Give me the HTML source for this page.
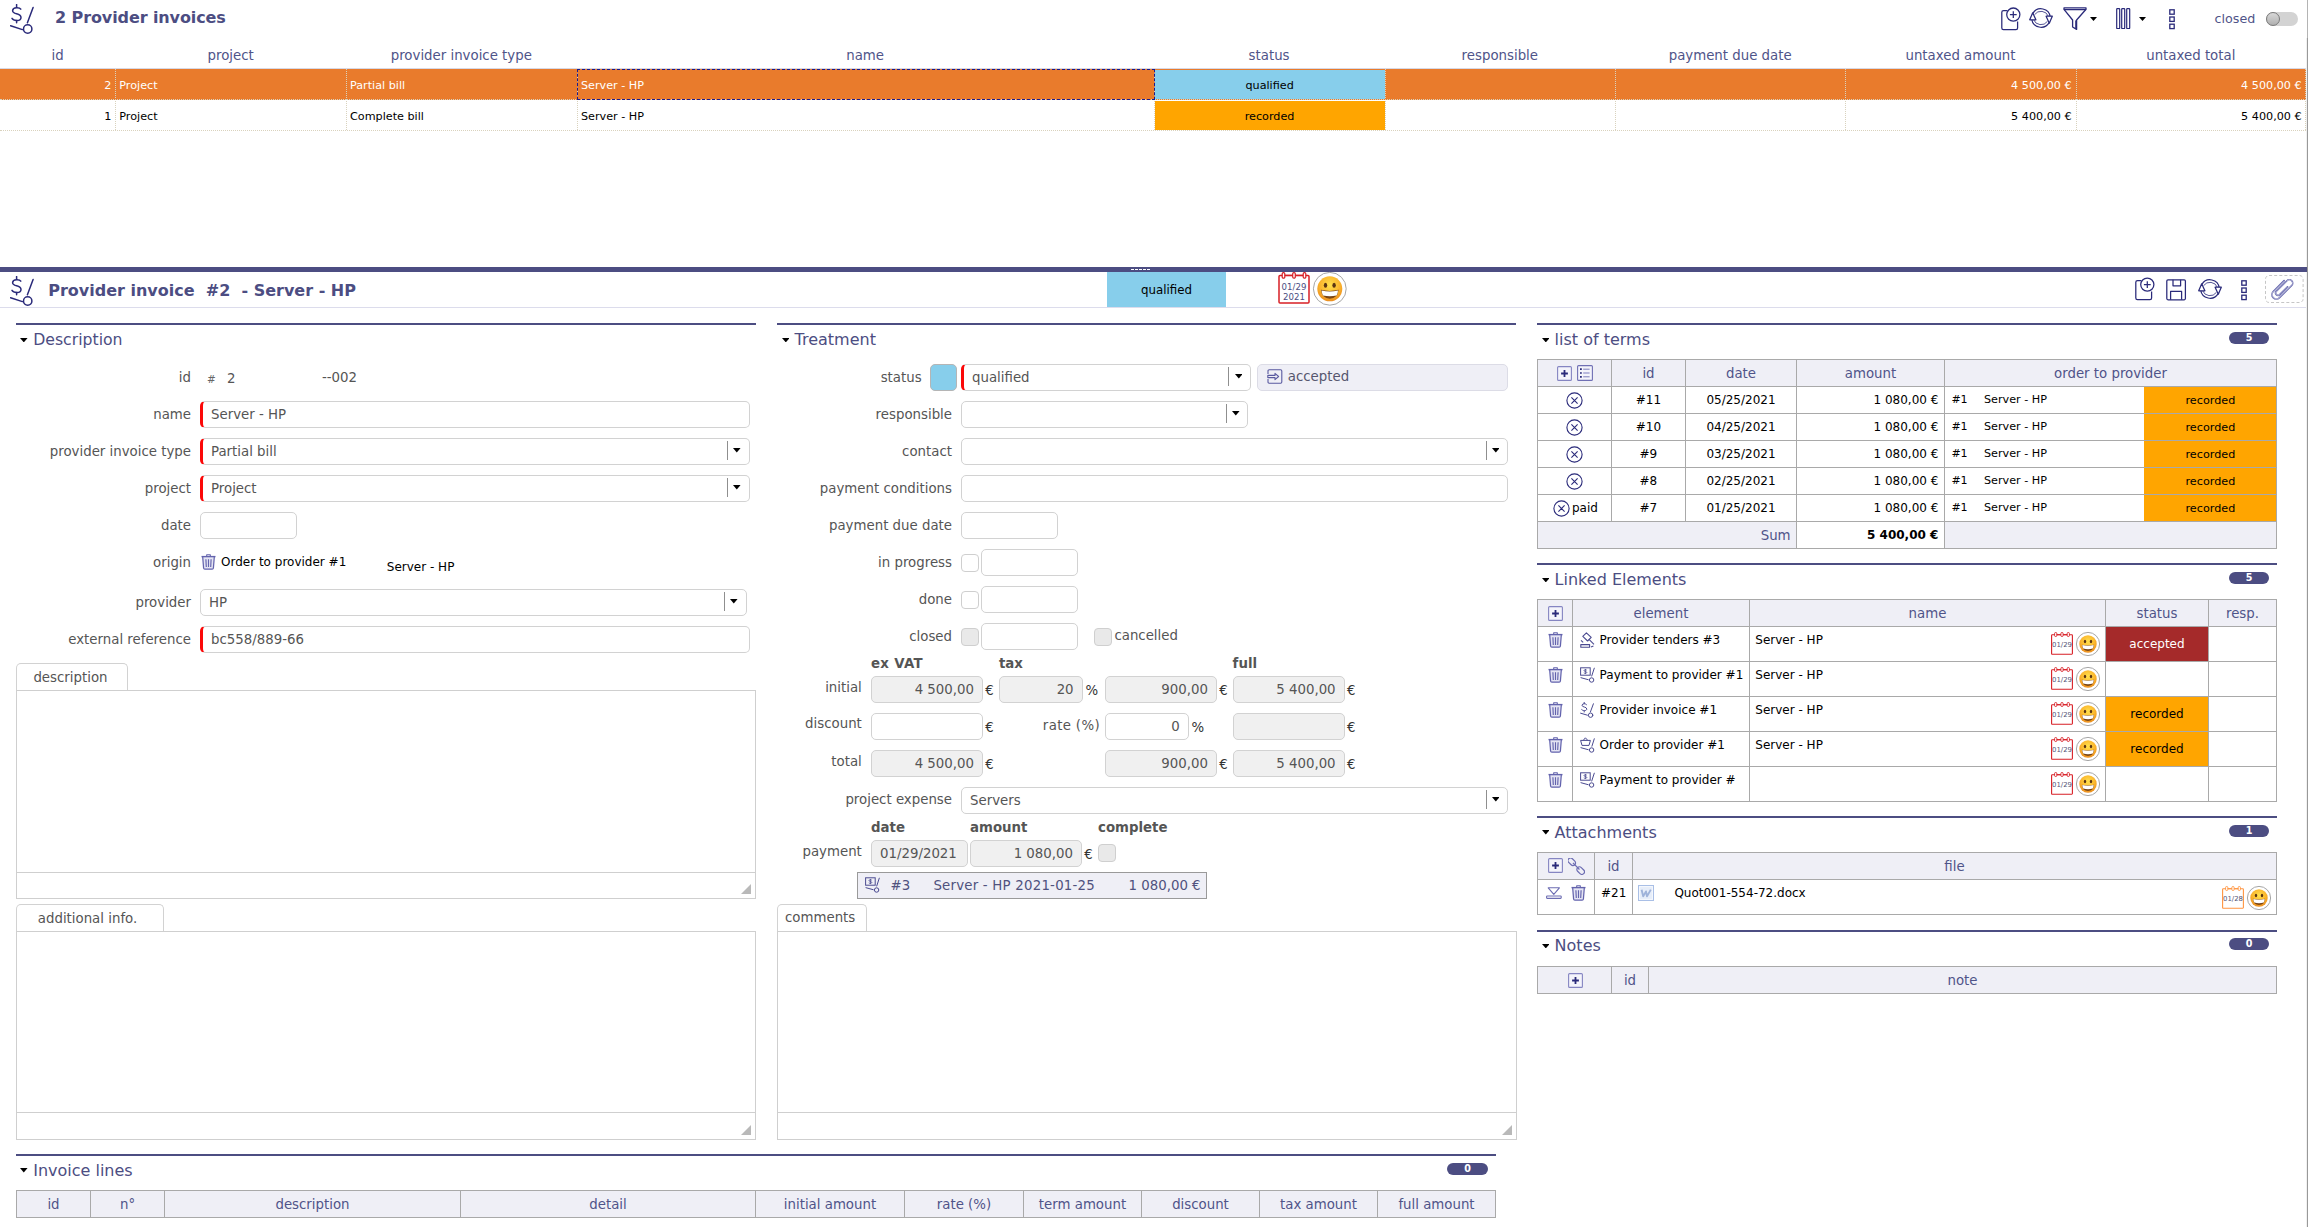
<!DOCTYPE html>
<html lang="en"><head><meta charset="utf-8"><title>Provider invoices</title>
<style>
html,body{margin:0;padding:0;background:#fff;overflow:hidden;}
body{font-family:"DejaVu Sans","Liberation Sans",sans-serif;}
#pg{position:relative;width:2308px;height:1227px;overflow:hidden;background:#fff;}
#pg *{box-sizing:border-box;}
.b{position:absolute;display:block;}
.t{position:absolute;white-space:nowrap;line-height:20px;height:20px;}
.in{position:absolute;border:1px solid #d2d2d2;border-radius:5px;background:#fff;}
.ro{background:#f0f0f0;}
.req{border-left:3.4px solid #fb0808;}
</style></head>
<body><div id="pg">
<svg class="b" style="left:10.00px;top:4.00px" width="26.00" height="31.00" viewBox="0 0 26 31"><g fill="none" stroke="#2a2a7a" stroke-width="1.5" stroke-linecap="round"><path d="M10.8 5.2 C9.8 3.4 3 2.6 2.6 6.6 C2.3 10.6 11 9 11 13.4 C11 17.6 3.4 17 2 14.4"/><path d="M6.6 0.6 V3.2 M6.6 16.6 V18.8"/><path d="M23.1 3.4 L17.4 18.8"/><path d="M0.6 21.7 L12.4 25.6"/><circle cx="17.7" cy="25" r="4.2"/></g></svg>
<div class="t" style="top:8.00px;font-size:16px;color:#4c4d82;font-weight:bold;left:55.00px;letter-spacing:-0.1px;">2 Provider invoices</div>
<svg class="b" style="left:2000.50px;top:6.50px;" width="20" height="24" viewBox="0 0 20 24"><g fill="none" stroke="#2a2a7a" stroke-width="1.25"><path d="M6.5 3.5 H2.5 Q0.8 3.5 0.8 5.2 V21 Q0.8 22.6 2.5 22.6 H15 Q16.6 22.6 16.6 21 V14.5"/><circle cx="12.3" cy="7.6" r="6.6" fill="#fff"/><path d="M12.3 4.2 V11 M8.9 7.6 H15.7"/></g></svg>
<svg class="b" style="left:2027.70px;top:7.30px;" width="26" height="22" viewBox="0 0 26 22"><g fill="none" stroke="#2a2a7a" stroke-width="1.25" stroke-linejoin="round"><path d="M4.9 6.4 A9.4 9.4 0 0 1 22.3 10"/><path d="M6.6 7.6 A7.9 7.9 0 0 1 20.4 9.4" stroke-width="0.8"/><path d="M21.1 15.6 A9.4 9.4 0 0 1 3.7 12"/><path d="M19.4 14.4 A7.9 7.9 0 0 1 5.6 12.6" stroke-width="0.8"/><path d="M18.1 9.2 H24.3 L21.3 16.2 Z" fill="#fff"/><path d="M1.7 12.8 H7.9 L4.7 5.8 Z" fill="#fff"/></g></svg>
<svg class="b" style="left:2062.50px;top:7.00px;" width="24" height="24" viewBox="0 0 24 24"><g fill="none" stroke="#2a2a7a" stroke-width="1.3" stroke-linejoin="round"><path d="M1 0.9 H23 V2.6 H1 Z"/><path d="M1.4 2.8 L9.6 13 V20 L13.6 22.4 V13 L22.6 2.8"/><path d="M12.6 13.4 V21.4" stroke-width="0.9"/></g></svg>
<svg class="b" style="left:2090.00px;top:16.50px" width="7" height="4" viewBox="0 0 7 4"><path d="M0 0 H7 L3.5 4 Z" fill="#000"/></svg>
<svg class="b" style="left:2116.00px;top:8.00px;" width="15" height="22" viewBox="0 0 15 22"><g fill="none" stroke="#2a2a7a" stroke-width="1.2"><rect x="0.7" y="0.7" width="3" height="19.8" rx="0.6"/><rect x="5.7" y="0.7" width="3" height="19.8" rx="0.6"/><rect x="10.7" y="0.7" width="3" height="19.8" rx="0.6"/></g></svg>
<svg class="b" style="left:2139.00px;top:16.50px" width="7" height="4" viewBox="0 0 7 4"><path d="M0 0 H7 L3.5 4 Z" fill="#000"/></svg>
<svg class="b" style="left:2168.50px;top:8.60px;" width="6" height="21" viewBox="0 0 6 21"><g fill="none" stroke="#2a2a7a" stroke-width="1.3"><rect x="0.8" y="0.8" width="4.4" height="4.4"/><rect x="0.8" y="8" width="4.4" height="4.4"/><rect x="0.8" y="15.2" width="4.4" height="4.4"/></g></svg>
<div class="t" style="top:9.00px;font-size:12.7px;color:#4f5489;left:2214.60px;">closed</div>
<div class="b" style="left:2266.00px;top:12.00px;width:32.00px;height:13.80px;border-radius:7px;background:#d3d3d3;"></div>
<div class="b" style="left:2265.60px;top:11.80px;width:14.20px;height:14.20px;border-radius:7.1px;background:linear-gradient(#d8d8d8,#b0b0b0);border:1px solid #7a7a7a;"></div>
<div class="b" style="left:2307.00px;top:0.00px;width:1.00px;height:38.00px;background:#b4b4b4;"></div>
<div class="b" style="left:2306.00px;top:38.00px;width:1.00px;height:1189.00px;background:#f1f1f1;"></div>
<div class="b" style="left:2307.00px;top:38.00px;width:1.00px;height:1189.00px;background:#999;"></div>
<div class="t" style="top:46.00px;font-size:13.33px;color:#4f5489;left:-342.35px;width:800px;text-align:center;">id</div>
<div class="t" style="top:46.00px;font-size:13.33px;color:#4f5489;left:-169.35px;width:800px;text-align:center;">project</div>
<div class="t" style="top:46.00px;font-size:13.33px;color:#4f5489;left:61.30px;width:800px;text-align:center;">provider invoice type</div>
<div class="t" style="top:46.00px;font-size:13.33px;color:#4f5489;left:465.10px;width:800px;text-align:center;">name</div>
<div class="t" style="top:46.00px;font-size:13.33px;color:#4f5489;left:869.10px;width:800px;text-align:center;">status</div>
<div class="t" style="top:46.00px;font-size:13.33px;color:#4f5489;left:1099.80px;width:800px;text-align:center;">responsible</div>
<div class="t" style="top:46.00px;font-size:13.33px;color:#4f5489;left:1330.20px;width:800px;text-align:center;">payment due date</div>
<div class="t" style="top:46.00px;font-size:13.33px;color:#4f5489;left:1560.50px;width:800px;text-align:center;">untaxed amount</div>
<div class="t" style="top:46.00px;font-size:13.33px;color:#4f5489;left:1790.80px;width:800px;text-align:center;">untaxed total</div>
<div class="b" style="left:0.00px;top:68.00px;width:2306.00px;height:1.00px;background:#d8d8e4;"></div>
<div class="b" style="left:0.00px;top:69.00px;width:2306.00px;height:30.60px;background:#e97b2c;"></div>
<div class="t" style="top:76.00px;font-size:11.2px;color:#fff;right:2196.70px;">2</div>
<div class="t" style="top:76.00px;font-size:11.2px;color:#fff;left:119.30px;">Project</div>
<div class="t" style="top:76.00px;font-size:11.2px;color:#fff;left:350.00px;">Partial bill</div>
<div class="t" style="top:76.00px;font-size:11.2px;color:#fff;left:581.00px;">Server - HP</div>
<div class="t" style="top:76.00px;font-size:11.2px;color:#fff;right:236.40px;">4 500,00 €</div>
<div class="t" style="top:76.00px;font-size:11.2px;color:#fff;right:6.40px;">4 500,00 €</div>
<div class="t" style="top:107.00px;font-size:11.2px;color:#000;right:2196.70px;">1</div>
<div class="t" style="top:107.00px;font-size:11.2px;color:#000;left:119.30px;">Project</div>
<div class="t" style="top:107.00px;font-size:11.2px;color:#000;left:350.00px;">Complete bill</div>
<div class="t" style="top:107.00px;font-size:11.2px;color:#000;left:581.00px;">Server - HP</div>
<div class="t" style="top:107.00px;font-size:11.2px;color:#000;right:236.40px;">5 400,00 €</div>
<div class="t" style="top:107.00px;font-size:11.2px;color:#000;right:6.40px;">5 400,00 €</div>
<div class="b" style="left:0.00px;top:99.20px;width:2306.00px;height:1.00px;border-top:1px dotted #d9d2bd;"></div>
<div class="b" style="left:0.00px;top:129.90px;width:2306.00px;height:1.00px;border-top:1px dotted #d9d2bd;"></div>
<div class="b" style="left:115.30px;top:69.00px;width:1.00px;height:61.00px;border-left:1px dotted #d9d2bd;"></div>
<div class="b" style="left:346.00px;top:69.00px;width:1.00px;height:61.00px;border-left:1px dotted #d9d2bd;"></div>
<div class="b" style="left:576.60px;top:69.00px;width:1.00px;height:61.00px;border-left:1px dotted #d9d2bd;"></div>
<div class="b" style="left:1153.60px;top:69.00px;width:1.00px;height:61.00px;border-left:1px dotted #d9d2bd;"></div>
<div class="b" style="left:1384.60px;top:69.00px;width:1.00px;height:61.00px;border-left:1px dotted #d9d2bd;"></div>
<div class="b" style="left:1615.00px;top:69.00px;width:1.00px;height:61.00px;border-left:1px dotted #d9d2bd;"></div>
<div class="b" style="left:1845.40px;top:69.00px;width:1.00px;height:61.00px;border-left:1px dotted #d9d2bd;"></div>
<div class="b" style="left:2075.60px;top:69.00px;width:1.00px;height:61.00px;border-left:1px dotted #d9d2bd;"></div>
<div class="b" style="left:2305.00px;top:69.00px;width:1.00px;height:61.00px;border-left:1px dotted #d9d2bd;"></div>
<div class="b" style="left:1155.00px;top:70.00px;width:229.80px;height:29.40px;background:#87ceeb;"></div>
<div class="b" style="left:1155.00px;top:100.70px;width:229.80px;height:29.30px;background:#ffa500;"></div>
<div class="t" style="top:76.00px;font-size:11.2px;color:#000;left:869.60px;width:800px;text-align:center;">qualified</div>
<div class="t" style="top:107.00px;font-size:11.2px;color:#000;left:869.60px;width:800px;text-align:center;">recorded</div>
<div class="b" style="left:577.00px;top:69.00px;width:578.40px;height:31.00px;border:1px dashed #1a1a8c;"></div>
<div class="b" style="left:0.00px;top:267.00px;width:2306.80px;height:5.00px;background:#4c4d82;"></div>
<div class="b" style="left:1130.50px;top:268.60px;width:3.00px;height:1.20px;background:#fff;"></div>
<div class="b" style="left:1134.50px;top:268.60px;width:3.00px;height:1.20px;background:#fff;"></div>
<div class="b" style="left:1138.50px;top:268.60px;width:3.00px;height:1.20px;background:#fff;"></div>
<div class="b" style="left:1142.50px;top:268.60px;width:3.00px;height:1.20px;background:#fff;"></div>
<div class="b" style="left:1146.50px;top:268.60px;width:3.00px;height:1.20px;background:#fff;"></div>
<div class="b" style="left:0.00px;top:307.00px;width:2306.00px;height:1.00px;background:#dcdcec;"></div>
<svg class="b" style="left:10.00px;top:276.20px" width="26.00" height="31.00" viewBox="0 0 26 31"><g fill="none" stroke="#2a2a7a" stroke-width="1.5" stroke-linecap="round"><path d="M10.8 5.2 C9.8 3.4 3 2.6 2.6 6.6 C2.3 10.6 11 9 11 13.4 C11 17.6 3.4 17 2 14.4"/><path d="M6.6 0.6 V3.2 M6.6 16.6 V18.8"/><path d="M23.1 3.4 L17.4 18.8"/><path d="M0.6 21.7 L12.4 25.6"/><circle cx="17.7" cy="25" r="4.2"/></g></svg>
<div class="t" style="top:281.00px;font-size:16px;color:#4c4d82;font-weight:bold;left:48.20px;">Provider invoice&nbsp; #2&nbsp; - Server - HP</div>
<div class="b" style="left:1107.00px;top:272.00px;width:119.00px;height:35.00px;background:#87ceeb;"></div>
<div class="t" style="top:280.00px;font-size:11.8px;color:#000;left:766.50px;width:800px;text-align:center;">qualified</div>
<svg class="b" style="left:1277.60px;top:271.80px;" width="32" height="32" viewBox="0 0 32 32"><rect x="1" y="3.6" width="30" height="27.4" rx="1" fill="#fff" stroke="#d81f26" stroke-width="1.5"/><path d="M5.4 3.4 H26.6" stroke="#d81f26" stroke-width="1.3"/><g fill="#fff" stroke="#d81f26" stroke-width="1.2"><rect x="4.2" y="0.6" width="2.6" height="5.6" rx="1.2"/><rect x="14.7" y="0.6" width="2.6" height="5.6" rx="1.2"/><rect x="25.2" y="0.6" width="2.6" height="5.6" rx="1.2"/></g><text x="16" y="18.4" text-anchor="middle" font-family="DejaVu Sans, Liberation Sans, sans-serif" font-size="8.6" fill="#4c4d82">01/29</text><text x="16" y="28" text-anchor="middle" font-family="DejaVu Sans, Liberation Sans, sans-serif" font-size="8.6" fill="#4c4d82">2021</text></svg>
<svg class="b" style="left:1312.20px;top:271.20px;" width="35.6" height="35.6" viewBox="0 0 35.6 35.6"><defs><radialGradient id="sg1" cx="50%" cy="35%" r="70%"><stop offset="0" stop-color="#ffe14d"/><stop offset="0.55" stop-color="#fbb72e"/><stop offset="1" stop-color="#e8861c"/></radialGradient></defs><circle cx="17.8" cy="17.8" r="16.400000000000002" fill="#fff" stroke="#a6a6a6" stroke-width="1"/><g transform="translate(17.8 17.8) scale(1.000)"><circle cx="0" cy="0" r="12.5" fill="url(#sg1)"/><ellipse cx="-4.3" cy="-3.6" rx="1.7" ry="2.5" fill="#5b3413"/><ellipse cx="4.3" cy="-3.6" rx="1.7" ry="2.5" fill="#5b3413"/><path d="M-8.8 1 Q0 3.2 8.8 1 Q8 9.8 0 10 Q-8 9.8 -8.8 1 Z" fill="#7a4516"/><path d="M-8.2 1.6 Q0 3.6 8.2 1.6 Q8 5 6.8 6.6 Q0 8.2 -6.8 6.6 Q-8 5 -8.2 1.6 Z" fill="#fff"/></g></svg>
<svg class="b" style="left:2134.50px;top:277.00px;" width="20" height="24" viewBox="0 0 20 24"><g fill="none" stroke="#2a2a7a" stroke-width="1.25"><path d="M6.5 3.5 H2.5 Q0.8 3.5 0.8 5.2 V21 Q0.8 22.6 2.5 22.6 H15 Q16.6 22.6 16.6 21 V14.5"/><circle cx="12.3" cy="7.6" r="6.6" fill="#fff"/><path d="M12.3 4.2 V11 M8.9 7.6 H15.7"/></g></svg>
<svg class="b" style="left:2165.50px;top:278.60px;" width="21" height="22" viewBox="0 0 21 22"><g fill="none" stroke="#2a2a7a" stroke-width="1.25" stroke-linejoin="round"><rect x="0.8" y="0.8" width="18.6" height="20" rx="1.2"/><path d="M7 0.8 V6.8 H14.6 V0.8"/><path d="M4.6 20.8 V12.4 H15.6 V20.8"/></g></svg>
<svg class="b" style="left:2196.80px;top:278.40px;" width="26" height="22" viewBox="0 0 26 22"><g fill="none" stroke="#2a2a7a" stroke-width="1.25" stroke-linejoin="round"><path d="M4.9 6.4 A9.4 9.4 0 0 1 22.3 10"/><path d="M6.6 7.6 A7.9 7.9 0 0 1 20.4 9.4" stroke-width="0.8"/><path d="M21.1 15.6 A9.4 9.4 0 0 1 3.7 12"/><path d="M19.4 14.4 A7.9 7.9 0 0 1 5.6 12.6" stroke-width="0.8"/><path d="M18.1 9.2 H24.3 L21.3 16.2 Z" fill="#fff"/><path d="M1.7 12.8 H7.9 L4.7 5.8 Z" fill="#fff"/></g></svg>
<svg class="b" style="left:2240.60px;top:279.60px;" width="6" height="21" viewBox="0 0 6 21"><g fill="none" stroke="#2a2a7a" stroke-width="1.3"><rect x="0.8" y="0.8" width="4.4" height="4.4"/><rect x="0.8" y="8" width="4.4" height="4.4"/><rect x="0.8" y="15.2" width="4.4" height="4.4"/></g></svg>
<svg class="b" style="left:2264px;top:274px" width="41" height="30" viewBox="0 0 41 30"><rect x="1.5" y="1.5" width="37.6" height="27" rx="3.6" fill="none" stroke="#c6c6c6" stroke-width="1" stroke-dasharray="3 2.1"/></svg>
<svg class="b" style="left:2266.00px;top:273.40px;" width="32" height="32" viewBox="0 0 32 32"><g transform="translate(16 16) rotate(-45)" fill="none" stroke-linecap="round"><path d="M7.4 -4.4 L-8 -4.4 A4.4 4.4 0 0 0 -8 4.4 L9.3 4.4 A3.4 3.4 0 0 0 9.3 -2.4 L-5.6 -2.4 A2.4 2.4 0 0 0 -5.6 2.4 L5.5 2.4" stroke="#4c4ea0" stroke-width="1.55"/><path d="M7.4 -4.4 L-8 -4.4 A4.4 4.4 0 0 0 -8 4.4 L9.3 4.4 A3.4 3.4 0 0 0 9.3 -2.4 L-5.6 -2.4 A2.4 2.4 0 0 0 -5.6 2.4 L5.5 2.4" stroke="#fff" stroke-width="0.5"/></g></svg>
<div class="b" style="left:16.00px;top:323.30px;width:739.60px;height:2.00px;background:#4c4d82;"></div>
<svg class="b" style="left:20.40px;top:337.50px" width="7.6" height="4.4" viewBox="0 0 7.6 4.4"><path d="M0 0 H7.6 L3.8 4.4 Z" fill="#000"/></svg>
<div class="t" style="top:330.00px;font-size:15.7px;color:#4c4d82;left:33.20px;">Description</div>
<div class="t" style="top:368.00px;font-size:13.33px;color:#555555;right:2117.00px;">id</div>
<div class="t" style="top:369.00px;font-size:10.4px;color:#666;left:207.00px;">#</div>
<div class="t" style="top:369.00px;font-size:13.33px;color:#555555;left:227.00px;">2</div>
<div class="t" style="top:368.00px;font-size:13.33px;color:#555555;left:322.00px;">--002</div>
<div class="t" style="top:405.00px;font-size:13.33px;color:#555555;right:2117.00px;">name</div>
<div class="in req" style="left:200.00px;top:401.00px;width:549.60px;height:27.00px;"></div>
<div class="t" style="top:405.00px;font-size:13.33px;color:#555555;left:211.00px;">Server - HP</div>
<div class="t" style="top:442.00px;font-size:13.33px;color:#555555;right:2117.00px;">provider invoice type</div>
<div class="in req" style="left:200.00px;top:438.00px;width:549.60px;height:27.00px;"></div>
<div class="t" style="top:442.00px;font-size:13.33px;color:#555555;left:211.00px;">Partial bill</div>
<div class="b" style="left:727.00px;top:441.00px;width:1.00px;height:19.40px;background:#8f8f8f;"></div>
<svg class="b" style="left:733.20px;top:448.40px" width="7.6" height="4.6" viewBox="0 0 7.6 4.6"><path d="M0 0 H7.6 L3.8 4.6 Z" fill="#000"/></svg>
<div class="t" style="top:479.00px;font-size:13.33px;color:#555555;right:2117.00px;">project</div>
<div class="in req" style="left:200.00px;top:475.00px;width:549.60px;height:27.00px;"></div>
<div class="t" style="top:479.00px;font-size:13.33px;color:#555555;left:211.00px;">Project</div>
<div class="b" style="left:727.00px;top:478.00px;width:1.00px;height:19.40px;background:#8f8f8f;"></div>
<svg class="b" style="left:733.20px;top:485.40px" width="7.6" height="4.6" viewBox="0 0 7.6 4.6"><path d="M0 0 H7.6 L3.8 4.6 Z" fill="#000"/></svg>
<div class="t" style="top:516.00px;font-size:13.33px;color:#555555;right:2117.00px;">date</div>
<div class="in" style="left:200.00px;top:512.00px;width:96.60px;height:27.00px;"></div>
<div class="t" style="top:553.00px;font-size:13.33px;color:#555555;right:2117.00px;">origin</div>
<svg class="b" style="left:201.00px;top:554.40px;" width="15" height="16" viewBox="0 0 15 16"><g fill="none" stroke="#6363ad" stroke-width="1.25" stroke-linejoin="round"><path d="M5.7 2.2 V0.8 H9.3 V2.2" stroke-width="1.1"/><path d="M1.7 3 L2.6 14 Q2.7 15.2 3.9 15.2 H11.1 Q12.3 15.2 12.4 14 L13.3 3" fill="#e4e4f3"/><path d="M0.5 2.6 H14.5" stroke-width="1.4"/><path d="M4.9 5.2 L5.3 13 M7.5 5.2 V13 M10.1 5.2 L9.7 13" stroke-width="1.15"/></g></svg>
<div class="t" style="top:552.00px;font-size:12px;color:#000;left:221.00px;">Order to provider #1</div>
<div class="t" style="top:557.00px;font-size:12px;color:#000;left:386.80px;">Server - HP</div>
<div class="t" style="top:593.00px;font-size:13.33px;color:#555555;right:2117.00px;">provider</div>
<div class="in" style="left:200.00px;top:589.00px;width:546.80px;height:27.00px;"></div>
<div class="t" style="top:593.00px;font-size:13.33px;color:#555555;left:209.00px;">HP</div>
<div class="b" style="left:724.20px;top:592.00px;width:1.00px;height:19.40px;background:#8f8f8f;"></div>
<svg class="b" style="left:730.40px;top:599.40px" width="7.6" height="4.6" viewBox="0 0 7.6 4.6"><path d="M0 0 H7.6 L3.8 4.6 Z" fill="#000"/></svg>
<div class="t" style="top:630.00px;font-size:13.33px;color:#555555;right:2117.00px;">external reference</div>
<div class="in req" style="left:200.00px;top:626.00px;width:549.60px;height:27.00px;"></div>
<div class="t" style="top:630.00px;font-size:13.33px;color:#555555;left:211.00px;">bc558/889-66</div>
<div class="b" style="left:16.00px;top:663.40px;width:112.00px;height:27.60px;border:1px solid #d2d2d2;border-bottom:none;border-radius:5px 5px 0 0;background:#fff;"></div>
<div class="t" style="top:668.00px;font-size:13.33px;color:#555555;left:33.40px;">description</div>
<div class="b" style="left:16.00px;top:690.00px;width:740.00px;height:209.00px;border:1px solid #cfcfcf;background:#fff;"></div>
<div class="b" style="left:16.00px;top:871.60px;width:740.00px;height:1.00px;background:#cfcfcf;"></div>
<svg class="b" style="left:741.00px;top:884.00px" width="10" height="10" viewBox="0 0 10 10"><path d="M10 0 V10 H0 Z" fill="#b9b9b9"/></svg>
<div class="b" style="left:16.00px;top:904.20px;width:148.00px;height:27.40px;border:1px solid #d2d2d2;border-bottom:none;border-radius:5px 5px 0 0;background:#fff;"></div>
<div class="t" style="top:909.00px;font-size:13.33px;color:#555555;left:37.80px;">additional info.</div>
<div class="b" style="left:16.00px;top:930.60px;width:740.00px;height:209.00px;border:1px solid #cfcfcf;background:#fff;"></div>
<div class="b" style="left:16.00px;top:1112.40px;width:740.00px;height:1.00px;background:#cfcfcf;"></div>
<svg class="b" style="left:741.00px;top:1124.60px" width="10" height="10" viewBox="0 0 10 10"><path d="M10 0 V10 H0 Z" fill="#b9b9b9"/></svg>
<div class="b" style="left:16.00px;top:1154.00px;width:1479.60px;height:2.00px;background:#4c4d82;"></div>
<svg class="b" style="left:20.40px;top:1168.20px" width="7.6" height="4.4" viewBox="0 0 7.6 4.4"><path d="M0 0 H7.6 L3.8 4.4 Z" fill="#000"/></svg>
<div class="t" style="top:1161.00px;font-size:16px;color:#4c4d82;left:33.20px;">Invoice lines</div>
<div class="b" style="left:1447.40px;top:1162.80px;width:40.40px;height:12.00px;background:#4c4d82;border-radius:6px;"></div>
<div class="t" style="top:1159.00px;font-size:9.6px;color:#fff;font-weight:bold;left:1067.60px;width:800px;text-align:center;">0</div>
<div class="b" style="left:16.00px;top:1190.00px;width:1480.00px;height:28.00px;background:#efeff6;border:1px solid #a9a9a9;"></div>
<div class="b" style="left:90.00px;top:1190.00px;width:1.00px;height:28.00px;background:#a9a9a9;"></div>
<div class="b" style="left:164.00px;top:1190.00px;width:1.00px;height:28.00px;background:#a9a9a9;"></div>
<div class="b" style="left:460.00px;top:1190.00px;width:1.00px;height:28.00px;background:#a9a9a9;"></div>
<div class="b" style="left:755.00px;top:1190.00px;width:1.00px;height:28.00px;background:#a9a9a9;"></div>
<div class="b" style="left:904.00px;top:1190.00px;width:1.00px;height:28.00px;background:#a9a9a9;"></div>
<div class="b" style="left:1023.00px;top:1190.00px;width:1.00px;height:28.00px;background:#a9a9a9;"></div>
<div class="b" style="left:1141.00px;top:1190.00px;width:1.00px;height:28.00px;background:#a9a9a9;"></div>
<div class="b" style="left:1259.00px;top:1190.00px;width:1.00px;height:28.00px;background:#a9a9a9;"></div>
<div class="b" style="left:1377.00px;top:1190.00px;width:1.00px;height:28.00px;background:#a9a9a9;"></div>
<div class="t" style="top:1195.00px;font-size:13.33px;color:#4f5489;left:-346.50px;width:800px;text-align:center;">id</div>
<div class="t" style="top:1195.00px;font-size:13.33px;color:#4f5489;left:-272.50px;width:800px;text-align:center;">n°</div>
<div class="t" style="top:1195.00px;font-size:13.33px;color:#4f5489;left:-87.50px;width:800px;text-align:center;">description</div>
<div class="t" style="top:1195.00px;font-size:13.33px;color:#4f5489;left:208.00px;width:800px;text-align:center;">detail</div>
<div class="t" style="top:1195.00px;font-size:13.33px;color:#4f5489;left:430.00px;width:800px;text-align:center;">initial amount</div>
<div class="t" style="top:1195.00px;font-size:13.33px;color:#4f5489;left:564.00px;width:800px;text-align:center;">rate (%)</div>
<div class="t" style="top:1195.00px;font-size:13.33px;color:#4f5489;left:682.50px;width:800px;text-align:center;">term amount</div>
<div class="t" style="top:1195.00px;font-size:13.33px;color:#4f5489;left:800.50px;width:800px;text-align:center;">discount</div>
<div class="t" style="top:1195.00px;font-size:13.33px;color:#4f5489;left:918.50px;width:800px;text-align:center;">tax amount</div>
<div class="t" style="top:1195.00px;font-size:13.33px;color:#4f5489;left:1036.50px;width:800px;text-align:center;">full amount</div>
<div class="b" style="left:777.30px;top:323.30px;width:739.10px;height:2.00px;background:#4c4d82;"></div>
<svg class="b" style="left:781.70px;top:337.50px" width="7.6" height="4.4" viewBox="0 0 7.6 4.4"><path d="M0 0 H7.6 L3.8 4.4 Z" fill="#000"/></svg>
<div class="t" style="top:330.00px;font-size:16px;color:#4c4d82;left:794.50px;">Treatment</div>
<div class="t" style="top:368.00px;font-size:13.33px;color:#555555;right:1386.40px;">status</div>
<div class="b" style="left:930.00px;top:364.00px;width:27.00px;height:27.00px;background:#87ceeb;border:1px solid #b5b5b5;border-radius:5px;"></div>
<div class="in req" style="left:961.00px;top:364.00px;width:290.00px;height:27.00px;"></div>
<div class="t" style="top:368.00px;font-size:13.33px;color:#555555;left:972.00px;">qualified</div>
<div class="b" style="left:1228.40px;top:367.00px;width:1.00px;height:19.40px;background:#8f8f8f;"></div>
<svg class="b" style="left:1234.60px;top:374.40px" width="7.6" height="4.6" viewBox="0 0 7.6 4.6"><path d="M0 0 H7.6 L3.8 4.6 Z" fill="#000"/></svg>
<div class="b" style="left:1256.80px;top:364.00px;width:251.40px;height:27.00px;background:#efeff6;border:1px solid #dcdce6;border-radius:5px;"></div>
<svg class="b" style="left:1267.40px;top:369.40px;" width="16" height="15" viewBox="0 0 16 15"><g fill="none" stroke="#5a5aa0" stroke-width="1.1" stroke-linejoin="round"><path d="M1 5 V2 Q1 0.8 2.2 0.8 H13.6 Q14.8 0.8 14.8 2 V13 Q14.8 14.2 13.6 14.2 H2.2 Q1 14.2 1 13 V10"/><path d="M0.8 6.4 H8 V4.4 L11.6 7.5 L8 10.6 V8.6 H0.8 Z"/></g></svg>
<div class="t" style="top:367.00px;font-size:13.33px;color:#56566e;left:1287.80px;">accepted</div>
<div class="t" style="top:405.00px;font-size:13.33px;color:#555555;right:1356.00px;">responsible</div>
<div class="in" style="left:961.00px;top:401.00px;width:287.40px;height:27.00px;"></div>
<div class="b" style="left:1225.80px;top:404.00px;width:1.00px;height:19.40px;background:#8f8f8f;"></div>
<svg class="b" style="left:1232.00px;top:411.40px" width="7.6" height="4.6" viewBox="0 0 7.6 4.6"><path d="M0 0 H7.6 L3.8 4.6 Z" fill="#000"/></svg>
<div class="t" style="top:442.00px;font-size:13.33px;color:#555555;right:1356.00px;">contact</div>
<div class="in" style="left:961.00px;top:438.00px;width:547.20px;height:27.00px;"></div>
<div class="b" style="left:1485.60px;top:441.00px;width:1.00px;height:19.40px;background:#8f8f8f;"></div>
<svg class="b" style="left:1491.80px;top:448.40px" width="7.6" height="4.6" viewBox="0 0 7.6 4.6"><path d="M0 0 H7.6 L3.8 4.6 Z" fill="#000"/></svg>
<div class="t" style="top:479.00px;font-size:13.33px;color:#555555;right:1356.00px;">payment conditions</div>
<div class="in" style="left:961.00px;top:475.00px;width:547.20px;height:27.00px;"></div>
<div class="t" style="top:516.00px;font-size:13.33px;color:#555555;right:1356.00px;">payment due date</div>
<div class="in" style="left:961.00px;top:512.00px;width:96.60px;height:27.00px;"></div>
<div class="t" style="top:553.00px;font-size:13.33px;color:#555555;right:1356.00px;">in progress</div>
<div class="b" style="left:961.00px;top:554.20px;width:17.60px;height:17.80px;border:1px solid #cfcfcf;border-radius:4px;background:#fff;"></div>
<div class="in" style="left:981.00px;top:549.00px;width:96.60px;height:27.00px;"></div>
<div class="t" style="top:590.00px;font-size:13.33px;color:#555555;right:1356.00px;">done</div>
<div class="b" style="left:961.00px;top:591.20px;width:17.60px;height:17.80px;border:1px solid #cfcfcf;border-radius:4px;background:#fff;"></div>
<div class="in" style="left:981.00px;top:586.00px;width:96.60px;height:27.00px;"></div>
<div class="t" style="top:627.00px;font-size:13.33px;color:#555555;right:1356.00px;">closed</div>
<div class="b" style="left:961.00px;top:628.20px;width:17.60px;height:17.80px;border:1px solid #cfcfcf;border-radius:4px;background:#e9e9e9;"></div>
<div class="in" style="left:981.00px;top:623.00px;width:96.60px;height:27.00px;"></div>
<div class="b" style="left:1094.00px;top:628.20px;width:17.60px;height:17.80px;border:1px solid #cfcfcf;border-radius:4px;background:#e9e9e9;"></div>
<div class="t" style="top:626.00px;font-size:13.33px;color:#555555;left:1114.40px;">cancelled</div>
<div class="t" style="top:654.00px;font-size:13.33px;color:#555555;font-weight:bold;left:871.00px;letter-spacing:0.3px;">ex VAT</div>
<div class="t" style="top:654.00px;font-size:13.33px;color:#555555;font-weight:bold;left:999.00px;">tax</div>
<div class="t" style="top:654.00px;font-size:13.33px;color:#555555;font-weight:bold;left:1232.60px;">full</div>
<div class="t" style="top:678.00px;font-size:13.33px;color:#555555;right:1446.20px;">initial</div>
<div class="in ro" style="left:871.00px;top:676.00px;width:112.00px;height:27.00px;"></div>
<div class="t" style="top:680.00px;font-size:13.33px;color:#555555;right:1334.00px;">4 500,00</div>
<div class="t" style="top:681.00px;font-size:13.33px;color:#333;left:985.20px;">€</div>
<div class="in ro" style="left:999.00px;top:676.00px;width:83.60px;height:27.00px;"></div>
<div class="t" style="top:680.00px;font-size:13.33px;color:#555555;right:1234.40px;">20</div>
<div class="t" style="top:681.00px;font-size:13.33px;color:#333;left:1085.60px;">%</div>
<div class="in ro" style="left:1105.00px;top:676.00px;width:112.00px;height:27.00px;"></div>
<div class="t" style="top:680.00px;font-size:13.33px;color:#555555;right:1100.00px;">900,00</div>
<div class="t" style="top:681.00px;font-size:13.33px;color:#333;left:1219.20px;">€</div>
<div class="in ro" style="left:1232.60px;top:676.00px;width:112.00px;height:27.00px;"></div>
<div class="t" style="top:680.00px;font-size:13.33px;color:#555555;right:972.40px;">5 400,00</div>
<div class="t" style="top:681.00px;font-size:13.33px;color:#333;left:1347.00px;">€</div>
<div class="t" style="top:714.00px;font-size:13.33px;color:#555555;right:1446.20px;">discount</div>
<div class="in" style="left:871.00px;top:713.00px;width:112.00px;height:27.00px;"></div>
<div class="t" style="top:718.00px;font-size:13.33px;color:#333;left:985.20px;">€</div>
<div class="t" style="top:716.00px;font-size:13.33px;color:#555555;right:1208.00px;letter-spacing:0.35px;">rate (%)</div>
<div class="in" style="left:1105.00px;top:713.00px;width:83.60px;height:27.00px;"></div>
<div class="t" style="top:717.00px;font-size:13.33px;color:#555555;right:1128.40px;">0</div>
<div class="t" style="top:718.00px;font-size:13.33px;color:#333;left:1191.60px;">%</div>
<div class="in ro" style="left:1232.60px;top:713.00px;width:112.00px;height:27.00px;"></div>
<div class="t" style="top:718.00px;font-size:13.33px;color:#333;left:1347.00px;">€</div>
<div class="t" style="top:752.00px;font-size:13.33px;color:#555555;right:1446.20px;">total</div>
<div class="in ro" style="left:871.00px;top:750.00px;width:112.00px;height:27.00px;"></div>
<div class="t" style="top:754.00px;font-size:13.33px;color:#555555;right:1334.00px;">4 500,00</div>
<div class="t" style="top:755.00px;font-size:13.33px;color:#333;left:985.20px;">€</div>
<div class="in ro" style="left:1105.00px;top:750.00px;width:112.00px;height:27.00px;"></div>
<div class="t" style="top:754.00px;font-size:13.33px;color:#555555;right:1100.00px;">900,00</div>
<div class="t" style="top:755.00px;font-size:13.33px;color:#333;left:1219.20px;">€</div>
<div class="in ro" style="left:1232.60px;top:750.00px;width:112.00px;height:27.00px;"></div>
<div class="t" style="top:754.00px;font-size:13.33px;color:#555555;right:972.40px;">5 400,00</div>
<div class="t" style="top:755.00px;font-size:13.33px;color:#333;left:1347.00px;">€</div>
<div class="t" style="top:790.00px;font-size:13.33px;color:#555555;right:1356.00px;">project expense</div>
<div class="in" style="left:961.00px;top:787.00px;width:547.20px;height:27.00px;"></div>
<div class="t" style="top:791.00px;font-size:13.33px;color:#555555;left:970.00px;">Servers</div>
<div class="b" style="left:1485.60px;top:790.00px;width:1.00px;height:19.40px;background:#8f8f8f;"></div>
<svg class="b" style="left:1491.80px;top:797.40px" width="7.6" height="4.6" viewBox="0 0 7.6 4.6"><path d="M0 0 H7.6 L3.8 4.6 Z" fill="#000"/></svg>
<div class="t" style="top:818.00px;font-size:13.33px;color:#555555;font-weight:bold;left:871.00px;">date</div>
<div class="t" style="top:818.00px;font-size:13.33px;color:#555555;font-weight:bold;left:970.00px;">amount</div>
<div class="t" style="top:818.00px;font-size:13.33px;color:#555555;font-weight:bold;left:1098.00px;">complete</div>
<div class="t" style="top:842.00px;font-size:13.33px;color:#555555;right:1446.20px;">payment</div>
<div class="in ro" style="left:871.00px;top:840.00px;width:97.00px;height:27.00px;"></div>
<div class="t" style="top:844.00px;font-size:13.33px;color:#555555;left:880.00px;">01/29/2021</div>
<div class="in ro" style="left:970.00px;top:840.00px;width:112.00px;height:27.00px;"></div>
<div class="t" style="top:844.00px;font-size:13.33px;color:#555555;right:1235.00px;">1 080,00</div>
<div class="t" style="top:845.00px;font-size:13.33px;color:#333;left:1084.20px;">€</div>
<div class="b" style="left:1098.00px;top:844.20px;width:17.60px;height:17.80px;border:1px solid #cfcfcf;border-radius:4px;background:#e9e9e9;"></div>
<div class="b" style="left:857.40px;top:872.00px;width:349.80px;height:27.00px;background:#efeff6;border:1px solid #9a9a9a;"></div>
<svg class="b" style="left:865.00px;top:877.40px;" width="15" height="16" viewBox="0 0 15 16"><g fill="none" stroke="#4a4a90" stroke-width="1"><rect x="0.6" y="0.8" width="9.6" height="7.4"/><path d="M5.4 2 V7 M6.8 3.2 C6 2.4 4 2.6 4 3.6 C4 4.8 6.8 4.2 6.8 5.4 C6.8 6.6 4.6 6.6 3.8 5.8" stroke-width="0.8"/><path d="M14.4 0.8 L11.6 9.4"/><path d="M0.6 10.6 L8.6 12.8"/><circle cx="11.6" cy="13" r="2.2"/></g></svg>
<div class="t" style="top:876.00px;font-size:13.33px;color:#50527e;left:890.60px;">#3</div>
<div class="t" style="top:876.00px;font-size:13.33px;color:#50527e;left:933.40px;letter-spacing:0.22px;">Server - HP 2021-01-25</div>
<div class="t" style="top:876.00px;font-size:13.33px;color:#50527e;right:1107.40px;">1 080,00 €</div>
<div class="b" style="left:777.00px;top:904.00px;width:90.00px;height:27.60px;border:1px solid #d2d2d2;border-bottom:none;border-radius:5px 5px 0 0;background:#fff;"></div>
<div class="t" style="top:908.00px;font-size:13.33px;color:#555555;left:785.00px;">comments</div>
<div class="b" style="left:777.00px;top:930.60px;width:740.00px;height:209.00px;border:1px solid #cfcfcf;background:#fff;"></div>
<div class="b" style="left:777.00px;top:1112.40px;width:740.00px;height:1.00px;background:#cfcfcf;"></div>
<svg class="b" style="left:1502.00px;top:1124.60px" width="10" height="10" viewBox="0 0 10 10"><path d="M10 0 V10 H0 Z" fill="#b9b9b9"/></svg>
<div class="b" style="left:1537.40px;top:323.30px;width:739.60px;height:2.00px;background:#4c4d82;"></div>
<svg class="b" style="left:1541.80px;top:337.50px" width="7.6" height="4.4" viewBox="0 0 7.6 4.4"><path d="M0 0 H7.6 L3.8 4.4 Z" fill="#000"/></svg>
<div class="t" style="top:330.00px;font-size:16px;color:#4c4d82;left:1554.60px;">list of terms</div>
<div class="b" style="left:2228.80px;top:332.10px;width:40.40px;height:12.00px;background:#4c4d82;border-radius:6px;"></div>
<div class="t" style="top:328.00px;font-size:9.6px;color:#fff;font-weight:bold;left:1849.00px;width:800px;text-align:center;">5</div>
<div class="b" style="left:1537.00px;top:359.00px;width:739.00px;height:27.00px;background:#efeff6;"></div>
<div class="b" style="left:1537.00px;top:521.00px;width:739.00px;height:27.00px;background:#efeff6;"></div>
<div class="b" style="left:1796.00px;top:521.00px;width:148.00px;height:27.00px;background:#fff;"></div>
<div class="b" style="left:2144.00px;top:387.00px;width:132.00px;height:26.00px;background:#ffa500;"></div>
<div class="b" style="left:2144.00px;top:414.00px;width:132.00px;height:26.00px;background:#ffa500;"></div>
<div class="b" style="left:2144.00px;top:441.00px;width:132.00px;height:26.00px;background:#ffa500;"></div>
<div class="b" style="left:2144.00px;top:468.00px;width:132.00px;height:26.00px;background:#ffa500;"></div>
<div class="b" style="left:2144.00px;top:495.00px;width:132.00px;height:26.00px;background:#ffa500;"></div>
<div class="b" style="left:1537.00px;top:359.00px;width:740.00px;height:1.00px;background:#a9a9a9;"></div>
<div class="b" style="left:1537.00px;top:386.00px;width:740.00px;height:1.00px;background:#a9a9a9;"></div>
<div class="b" style="left:1537.00px;top:413.00px;width:740.00px;height:1.00px;background:#a9a9a9;"></div>
<div class="b" style="left:1537.00px;top:440.00px;width:740.00px;height:1.00px;background:#a9a9a9;"></div>
<div class="b" style="left:1537.00px;top:467.00px;width:740.00px;height:1.00px;background:#a9a9a9;"></div>
<div class="b" style="left:1537.00px;top:494.00px;width:740.00px;height:1.00px;background:#a9a9a9;"></div>
<div class="b" style="left:1537.00px;top:521.00px;width:740.00px;height:1.00px;background:#a9a9a9;"></div>
<div class="b" style="left:1537.00px;top:548.00px;width:740.00px;height:1.00px;background:#a9a9a9;"></div>
<div class="b" style="left:1537.00px;top:359.00px;width:1.00px;height:190.00px;background:#a9a9a9;"></div>
<div class="b" style="left:1796.00px;top:359.00px;width:1.00px;height:190.00px;background:#a9a9a9;"></div>
<div class="b" style="left:1944.00px;top:359.00px;width:1.00px;height:190.00px;background:#a9a9a9;"></div>
<div class="b" style="left:2276.00px;top:359.00px;width:1.00px;height:190.00px;background:#a9a9a9;"></div>
<div class="b" style="left:1611.00px;top:359.00px;width:1.00px;height:162.00px;background:#a9a9a9;"></div>
<div class="b" style="left:1685.00px;top:359.00px;width:1.00px;height:162.00px;background:#a9a9a9;"></div>
<svg class="b" style="left:1556.60px;top:365.60px;" width="15" height="15" viewBox="0 0 15 15"><g fill="none"><rect x="0.6" y="0.6" width="13.8" height="13.8" rx="1" stroke-width="1.1" stroke="#8585c2" fill="#f4f4fb"/><path d="M7.5 4.1 V10.9 M4.1 7.5 H10.9" stroke-width="1.8" stroke="#2a2a7a"/></g></svg>
<svg class="b" style="left:1577.00px;top:365.00px;" width="16" height="16" viewBox="0 0 16 16"><g fill="none"><rect x="0.6" y="0.6" width="14.8" height="14.8" rx="1" fill="#f4f4fb" stroke="#6f6fb4" stroke-width="1.1"/><path d="M6.2 4.2 H12.6 M6.2 11.8 H12.6" stroke-width="0.9" stroke="#6f6fb4"/><path d="M6.2 8 H12.6" stroke-width="1.6" stroke="#a9a9d6"/><path d="M3 4.2 H4.8 M3 8 H4.8 M3 11.8 H4.8" stroke-width="1.7" stroke="#2a2a7a"/></g></svg>
<div class="t" style="top:364.00px;font-size:13.33px;color:#4f5489;left:1248.50px;width:800px;text-align:center;">id</div>
<div class="t" style="top:364.00px;font-size:13.33px;color:#4f5489;left:1341.00px;width:800px;text-align:center;">date</div>
<div class="t" style="top:364.00px;font-size:13.33px;color:#4f5489;left:1470.50px;width:800px;text-align:center;">amount</div>
<div class="t" style="top:364.00px;font-size:13.33px;color:#4f5489;left:1710.50px;width:800px;text-align:center;">order to provider</div>
<svg class="b" style="left:1566.40px;top:391.90px;" width="17" height="17" viewBox="0 0 17 17"><g fill="none" stroke="#2a2a7a" stroke-width="1.1"><circle cx="8.5" cy="8.5" r="7.6"/><path d="M5.4 5.4 L11.6 11.6 M11.6 5.4 L5.4 11.6"/></g></svg>
<div class="t" style="top:390.00px;font-size:12px;color:#000;left:1248.40px;width:800px;text-align:center;">#11</div>
<div class="t" style="top:390.00px;font-size:12px;color:#000;left:1341.00px;width:800px;text-align:center;">05/25/2021</div>
<div class="t" style="top:390.00px;font-size:12px;color:#000;right:369.60px;">1 080,00 €</div>
<div class="t" style="top:390.00px;font-size:11px;color:#000;left:1951.40px;">#1</div>
<div class="t" style="top:390.00px;font-size:11.2px;color:#000;left:1984.00px;">Server - HP</div>
<div class="t" style="top:391.00px;font-size:11.2px;color:#000;left:1810.40px;width:800px;text-align:center;">recorded</div>
<svg class="b" style="left:1566.40px;top:418.90px;" width="17" height="17" viewBox="0 0 17 17"><g fill="none" stroke="#2a2a7a" stroke-width="1.1"><circle cx="8.5" cy="8.5" r="7.6"/><path d="M5.4 5.4 L11.6 11.6 M11.6 5.4 L5.4 11.6"/></g></svg>
<div class="t" style="top:417.00px;font-size:12px;color:#000;left:1248.40px;width:800px;text-align:center;">#10</div>
<div class="t" style="top:417.00px;font-size:12px;color:#000;left:1341.00px;width:800px;text-align:center;">04/25/2021</div>
<div class="t" style="top:417.00px;font-size:12px;color:#000;right:369.60px;">1 080,00 €</div>
<div class="t" style="top:417.00px;font-size:11px;color:#000;left:1951.40px;">#1</div>
<div class="t" style="top:417.00px;font-size:11.2px;color:#000;left:1984.00px;">Server - HP</div>
<div class="t" style="top:418.00px;font-size:11.2px;color:#000;left:1810.40px;width:800px;text-align:center;">recorded</div>
<svg class="b" style="left:1566.40px;top:445.90px;" width="17" height="17" viewBox="0 0 17 17"><g fill="none" stroke="#2a2a7a" stroke-width="1.1"><circle cx="8.5" cy="8.5" r="7.6"/><path d="M5.4 5.4 L11.6 11.6 M11.6 5.4 L5.4 11.6"/></g></svg>
<div class="t" style="top:444.00px;font-size:12px;color:#000;left:1248.40px;width:800px;text-align:center;">#9</div>
<div class="t" style="top:444.00px;font-size:12px;color:#000;left:1341.00px;width:800px;text-align:center;">03/25/2021</div>
<div class="t" style="top:444.00px;font-size:12px;color:#000;right:369.60px;">1 080,00 €</div>
<div class="t" style="top:444.00px;font-size:11px;color:#000;left:1951.40px;">#1</div>
<div class="t" style="top:444.00px;font-size:11.2px;color:#000;left:1984.00px;">Server - HP</div>
<div class="t" style="top:445.00px;font-size:11.2px;color:#000;left:1810.40px;width:800px;text-align:center;">recorded</div>
<svg class="b" style="left:1566.40px;top:472.90px;" width="17" height="17" viewBox="0 0 17 17"><g fill="none" stroke="#2a2a7a" stroke-width="1.1"><circle cx="8.5" cy="8.5" r="7.6"/><path d="M5.4 5.4 L11.6 11.6 M11.6 5.4 L5.4 11.6"/></g></svg>
<div class="t" style="top:471.00px;font-size:12px;color:#000;left:1248.40px;width:800px;text-align:center;">#8</div>
<div class="t" style="top:471.00px;font-size:12px;color:#000;left:1341.00px;width:800px;text-align:center;">02/25/2021</div>
<div class="t" style="top:471.00px;font-size:12px;color:#000;right:369.60px;">1 080,00 €</div>
<div class="t" style="top:471.00px;font-size:11px;color:#000;left:1951.40px;">#1</div>
<div class="t" style="top:471.00px;font-size:11.2px;color:#000;left:1984.00px;">Server - HP</div>
<div class="t" style="top:472.00px;font-size:11.2px;color:#000;left:1810.40px;width:800px;text-align:center;">recorded</div>
<svg class="b" style="left:1553.40px;top:499.90px;" width="17" height="17" viewBox="0 0 17 17"><g fill="none" stroke="#2a2a7a" stroke-width="1.1"><circle cx="8.5" cy="8.5" r="7.6"/><path d="M5.4 5.4 L11.6 11.6 M11.6 5.4 L5.4 11.6"/></g></svg>
<div class="t" style="top:498.00px;font-size:12px;color:#000;left:1572.00px;">paid</div>
<div class="t" style="top:498.00px;font-size:12px;color:#000;left:1248.40px;width:800px;text-align:center;">#7</div>
<div class="t" style="top:498.00px;font-size:12px;color:#000;left:1341.00px;width:800px;text-align:center;">01/25/2021</div>
<div class="t" style="top:498.00px;font-size:12px;color:#000;right:369.60px;">1 080,00 €</div>
<div class="t" style="top:498.00px;font-size:11px;color:#000;left:1951.40px;">#1</div>
<div class="t" style="top:498.00px;font-size:11.2px;color:#000;left:1984.00px;">Server - HP</div>
<div class="t" style="top:499.00px;font-size:11.2px;color:#000;left:1810.40px;width:800px;text-align:center;">recorded</div>
<div class="t" style="top:526.00px;font-size:13.33px;color:#4f5489;right:517.40px;">Sum</div>
<div class="t" style="top:525.00px;font-size:12px;color:#000;font-weight:bold;right:369.60px;">5 400,00 €</div>
<div class="b" style="left:1537.40px;top:563.30px;width:739.60px;height:2.00px;background:#4c4d82;"></div>
<svg class="b" style="left:1541.80px;top:577.50px" width="7.6" height="4.4" viewBox="0 0 7.6 4.4"><path d="M0 0 H7.6 L3.8 4.4 Z" fill="#000"/></svg>
<div class="t" style="top:570.00px;font-size:16px;color:#4c4d82;left:1554.60px;">Linked Elements</div>
<div class="b" style="left:2228.80px;top:572.10px;width:40.40px;height:12.00px;background:#4c4d82;border-radius:6px;"></div>
<div class="t" style="top:568.00px;font-size:9.6px;color:#fff;font-weight:bold;left:1849.00px;width:800px;text-align:center;">5</div>
<div class="b" style="left:1537.00px;top:599.00px;width:739.00px;height:27.00px;background:#efeff6;"></div>
<div class="b" style="left:2106.00px;top:627.00px;width:102.00px;height:34.00px;background:#a52a2a;"></div>
<div class="b" style="left:2106.00px;top:697.00px;width:102.00px;height:34.00px;background:#ffa500;"></div>
<div class="b" style="left:2106.00px;top:732.00px;width:102.00px;height:34.00px;background:#ffa500;"></div>
<div class="b" style="left:1537.00px;top:599.00px;width:740.00px;height:1.00px;background:#a9a9a9;"></div>
<div class="b" style="left:1537.00px;top:626.00px;width:740.00px;height:1.00px;background:#a9a9a9;"></div>
<div class="b" style="left:1537.00px;top:661.00px;width:740.00px;height:1.00px;background:#a9a9a9;"></div>
<div class="b" style="left:1537.00px;top:696.00px;width:740.00px;height:1.00px;background:#a9a9a9;"></div>
<div class="b" style="left:1537.00px;top:731.00px;width:740.00px;height:1.00px;background:#a9a9a9;"></div>
<div class="b" style="left:1537.00px;top:766.00px;width:740.00px;height:1.00px;background:#a9a9a9;"></div>
<div class="b" style="left:1537.00px;top:801.00px;width:740.00px;height:1.00px;background:#a9a9a9;"></div>
<div class="b" style="left:1537.00px;top:599.00px;width:1.00px;height:203.00px;background:#a9a9a9;"></div>
<div class="b" style="left:1572.00px;top:599.00px;width:1.00px;height:203.00px;background:#a9a9a9;"></div>
<div class="b" style="left:1749.00px;top:599.00px;width:1.00px;height:203.00px;background:#a9a9a9;"></div>
<div class="b" style="left:2105.00px;top:599.00px;width:1.00px;height:203.00px;background:#a9a9a9;"></div>
<div class="b" style="left:2208.00px;top:599.00px;width:1.00px;height:203.00px;background:#a9a9a9;"></div>
<div class="b" style="left:2276.00px;top:599.00px;width:1.00px;height:203.00px;background:#a9a9a9;"></div>
<svg class="b" style="left:1547.60px;top:605.60px;" width="15" height="15" viewBox="0 0 15 15"><g fill="none"><rect x="0.6" y="0.6" width="13.8" height="13.8" rx="1" stroke-width="1.1" stroke="#8585c2" fill="#f4f4fb"/><path d="M7.5 4.1 V10.9 M4.1 7.5 H10.9" stroke-width="1.8" stroke="#2a2a7a"/></g></svg>
<div class="t" style="top:604.00px;font-size:13.33px;color:#4f5489;left:1261.00px;width:800px;text-align:center;">element</div>
<div class="t" style="top:604.00px;font-size:13.33px;color:#4f5489;left:1527.50px;width:800px;text-align:center;">name</div>
<div class="t" style="top:604.00px;font-size:13.33px;color:#4f5489;left:1757.00px;width:800px;text-align:center;">status</div>
<div class="t" style="top:604.00px;font-size:13.33px;color:#4f5489;left:1842.50px;width:800px;text-align:center;">resp.</div>
<svg class="b" style="left:1547.80px;top:632.20px;" width="15" height="16" viewBox="0 0 15 16"><g fill="none" stroke="#6363ad" stroke-width="1.25" stroke-linejoin="round"><path d="M5.7 2.2 V0.8 H9.3 V2.2" stroke-width="1.1"/><path d="M1.7 3 L2.6 14 Q2.7 15.2 3.9 15.2 H11.1 Q12.3 15.2 12.4 14 L13.3 3" fill="#e4e4f3"/><path d="M0.5 2.6 H14.5" stroke-width="1.4"/><path d="M4.9 5.2 L5.3 13 M7.5 5.2 V13 M10.1 5.2 L9.7 13" stroke-width="1.15"/></g></svg>
<svg class="b" style="left:1579.60px;top:631.60px;" width="15" height="16" viewBox="0 0 15 16"><g fill="none" stroke="#4a4a90" stroke-width="1.1" stroke-linejoin="round"><path d="M6.4 0.8 L11.2 5.4 L7.6 9 L2.8 4.4 Z"/><path d="M9 7.4 L14 12.4"/><path d="M0.8 12.6 H9.6 V15.2 H0.8 Z"/><path d="M3.2 10.4 L1 8.4 M11 15 L13.4 14"/></g></svg>
<div class="t" style="top:630.00px;font-size:12px;color:#000;left:1599.60px;">Provider tenders #3</div>
<div class="t" style="top:630.00px;font-size:12px;color:#000;left:1755.30px;">Server - HP</div>
<svg class="b" style="left:2050.90px;top:631.60px;" width="22" height="23" viewBox="0 0 22 23"><rect x="0.6" y="2.8" width="20.8" height="19.4" rx="0.6" fill="#fff" stroke="#d81f26" stroke-width="1.1"/><path d="M3 2.7 H19" stroke="#d81f26" stroke-width="1"/><g fill="#fff" stroke="#d81f26" stroke-width="0.9"><rect x="3.6" y="0.5" width="2.2" height="4" rx="1"/><rect x="9.9" y="0.5" width="2.2" height="4" rx="1"/><rect x="16.2" y="0.5" width="2.2" height="4" rx="1"/></g><text x="11" y="15.2" text-anchor="middle" font-family="DejaVu Sans, Liberation Sans, sans-serif" font-size="6.9" fill="#555577">01/29</text></svg>
<svg class="b" style="left:2075.10px;top:631.00px;" width="26" height="26" viewBox="0 0 26 26"><defs><radialGradient id="sg2" cx="50%" cy="35%" r="70%"><stop offset="0" stop-color="#ffe14d"/><stop offset="0.55" stop-color="#fbb72e"/><stop offset="1" stop-color="#e8861c"/></radialGradient></defs><circle cx="13" cy="13" r="11.6" fill="#fff" stroke="#a6a6a6" stroke-width="1"/><g transform="translate(13 13) scale(0.696)"><circle cx="0" cy="0" r="12.5" fill="url(#sg2)"/><ellipse cx="-4.3" cy="-3.6" rx="1.7" ry="2.5" fill="#5b3413"/><ellipse cx="4.3" cy="-3.6" rx="1.7" ry="2.5" fill="#5b3413"/><path d="M-8.8 1 Q0 3.2 8.8 1 Q8 9.8 0 10 Q-8 9.8 -8.8 1 Z" fill="#7a4516"/><path d="M-8.2 1.6 Q0 3.6 8.2 1.6 Q8 5 6.8 6.6 Q0 8.2 -6.8 6.6 Q-8 5 -8.2 1.6 Z" fill="#fff"/></g></svg>
<div class="t" style="top:634.00px;font-size:12px;color:#fff;left:1757.00px;width:800px;text-align:center;">accepted</div>
<svg class="b" style="left:1547.80px;top:667.20px;" width="15" height="16" viewBox="0 0 15 16"><g fill="none" stroke="#6363ad" stroke-width="1.25" stroke-linejoin="round"><path d="M5.7 2.2 V0.8 H9.3 V2.2" stroke-width="1.1"/><path d="M1.7 3 L2.6 14 Q2.7 15.2 3.9 15.2 H11.1 Q12.3 15.2 12.4 14 L13.3 3" fill="#e4e4f3"/><path d="M0.5 2.6 H14.5" stroke-width="1.4"/><path d="M4.9 5.2 L5.3 13 M7.5 5.2 V13 M10.1 5.2 L9.7 13" stroke-width="1.15"/></g></svg>
<svg class="b" style="left:1579.60px;top:666.60px;" width="15" height="16" viewBox="0 0 15 16"><g fill="none" stroke="#4a4a90" stroke-width="1"><rect x="0.6" y="0.8" width="9.6" height="7.4"/><path d="M5.4 2 V7 M6.8 3.2 C6 2.4 4 2.6 4 3.6 C4 4.8 6.8 4.2 6.8 5.4 C6.8 6.6 4.6 6.6 3.8 5.8" stroke-width="0.8"/><path d="M14.4 0.8 L11.6 9.4"/><path d="M0.6 10.6 L8.6 12.8"/><circle cx="11.6" cy="13" r="2.2"/></g></svg>
<div class="t" style="top:665.00px;font-size:12px;color:#000;left:1599.60px;">Payment to provider #1</div>
<div class="t" style="top:665.00px;font-size:12px;color:#000;left:1755.30px;">Server - HP</div>
<svg class="b" style="left:2050.90px;top:666.60px;" width="22" height="23" viewBox="0 0 22 23"><rect x="0.6" y="2.8" width="20.8" height="19.4" rx="0.6" fill="#fff" stroke="#d81f26" stroke-width="1.1"/><path d="M3 2.7 H19" stroke="#d81f26" stroke-width="1"/><g fill="#fff" stroke="#d81f26" stroke-width="0.9"><rect x="3.6" y="0.5" width="2.2" height="4" rx="1"/><rect x="9.9" y="0.5" width="2.2" height="4" rx="1"/><rect x="16.2" y="0.5" width="2.2" height="4" rx="1"/></g><text x="11" y="15.2" text-anchor="middle" font-family="DejaVu Sans, Liberation Sans, sans-serif" font-size="6.9" fill="#555577">01/29</text></svg>
<svg class="b" style="left:2075.10px;top:666.00px;" width="26" height="26" viewBox="0 0 26 26"><defs><radialGradient id="sg3" cx="50%" cy="35%" r="70%"><stop offset="0" stop-color="#ffe14d"/><stop offset="0.55" stop-color="#fbb72e"/><stop offset="1" stop-color="#e8861c"/></radialGradient></defs><circle cx="13" cy="13" r="11.6" fill="#fff" stroke="#a6a6a6" stroke-width="1"/><g transform="translate(13 13) scale(0.696)"><circle cx="0" cy="0" r="12.5" fill="url(#sg3)"/><ellipse cx="-4.3" cy="-3.6" rx="1.7" ry="2.5" fill="#5b3413"/><ellipse cx="4.3" cy="-3.6" rx="1.7" ry="2.5" fill="#5b3413"/><path d="M-8.8 1 Q0 3.2 8.8 1 Q8 9.8 0 10 Q-8 9.8 -8.8 1 Z" fill="#7a4516"/><path d="M-8.2 1.6 Q0 3.6 8.2 1.6 Q8 5 6.8 6.6 Q0 8.2 -6.8 6.6 Q-8 5 -8.2 1.6 Z" fill="#fff"/></g></svg>
<svg class="b" style="left:1547.80px;top:702.20px;" width="15" height="16" viewBox="0 0 15 16"><g fill="none" stroke="#6363ad" stroke-width="1.25" stroke-linejoin="round"><path d="M5.7 2.2 V0.8 H9.3 V2.2" stroke-width="1.1"/><path d="M1.7 3 L2.6 14 Q2.7 15.2 3.9 15.2 H11.1 Q12.3 15.2 12.4 14 L13.3 3" fill="#e4e4f3"/><path d="M0.5 2.6 H14.5" stroke-width="1.4"/><path d="M4.9 5.2 L5.3 13 M7.5 5.2 V13 M10.1 5.2 L9.7 13" stroke-width="1.15"/></g></svg>
<svg class="b" style="left:1579.60px;top:701.60px;" width="15" height="16" viewBox="0 0 15 16"><g fill="none" stroke="#4a4a90" stroke-width="1" stroke-linecap="round"><path d="M6.6 2.6 C6 1.4 2.2 1.2 2 3.2 C1.8 5.4 6.8 4.6 6.8 7 C6.8 9.2 2.6 9 1.6 7.6"/><path d="M4.2 0.4 V1.6 M4.2 8.8 V10"/><path d="M13.4 1.8 L10.4 10"/><path d="M0.6 11.2 L7.4 13.2"/><circle cx="10.6" cy="13.2" r="2.2"/></g></svg>
<div class="t" style="top:700.00px;font-size:12px;color:#000;left:1599.60px;">Provider invoice #1</div>
<div class="t" style="top:700.00px;font-size:12px;color:#000;left:1755.30px;">Server - HP</div>
<svg class="b" style="left:2050.90px;top:701.60px;" width="22" height="23" viewBox="0 0 22 23"><rect x="0.6" y="2.8" width="20.8" height="19.4" rx="0.6" fill="#fff" stroke="#d81f26" stroke-width="1.1"/><path d="M3 2.7 H19" stroke="#d81f26" stroke-width="1"/><g fill="#fff" stroke="#d81f26" stroke-width="0.9"><rect x="3.6" y="0.5" width="2.2" height="4" rx="1"/><rect x="9.9" y="0.5" width="2.2" height="4" rx="1"/><rect x="16.2" y="0.5" width="2.2" height="4" rx="1"/></g><text x="11" y="15.2" text-anchor="middle" font-family="DejaVu Sans, Liberation Sans, sans-serif" font-size="6.9" fill="#555577">01/29</text></svg>
<svg class="b" style="left:2075.10px;top:701.00px;" width="26" height="26" viewBox="0 0 26 26"><defs><radialGradient id="sg4" cx="50%" cy="35%" r="70%"><stop offset="0" stop-color="#ffe14d"/><stop offset="0.55" stop-color="#fbb72e"/><stop offset="1" stop-color="#e8861c"/></radialGradient></defs><circle cx="13" cy="13" r="11.6" fill="#fff" stroke="#a6a6a6" stroke-width="1"/><g transform="translate(13 13) scale(0.696)"><circle cx="0" cy="0" r="12.5" fill="url(#sg4)"/><ellipse cx="-4.3" cy="-3.6" rx="1.7" ry="2.5" fill="#5b3413"/><ellipse cx="4.3" cy="-3.6" rx="1.7" ry="2.5" fill="#5b3413"/><path d="M-8.8 1 Q0 3.2 8.8 1 Q8 9.8 0 10 Q-8 9.8 -8.8 1 Z" fill="#7a4516"/><path d="M-8.2 1.6 Q0 3.6 8.2 1.6 Q8 5 6.8 6.6 Q0 8.2 -6.8 6.6 Q-8 5 -8.2 1.6 Z" fill="#fff"/></g></svg>
<div class="t" style="top:704.00px;font-size:12px;color:#000;left:1757.00px;width:800px;text-align:center;">recorded</div>
<svg class="b" style="left:1547.80px;top:737.20px;" width="15" height="16" viewBox="0 0 15 16"><g fill="none" stroke="#6363ad" stroke-width="1.25" stroke-linejoin="round"><path d="M5.7 2.2 V0.8 H9.3 V2.2" stroke-width="1.1"/><path d="M1.7 3 L2.6 14 Q2.7 15.2 3.9 15.2 H11.1 Q12.3 15.2 12.4 14 L13.3 3" fill="#e4e4f3"/><path d="M0.5 2.6 H14.5" stroke-width="1.4"/><path d="M4.9 5.2 L5.3 13 M7.5 5.2 V13 M10.1 5.2 L9.7 13" stroke-width="1.15"/></g></svg>
<svg class="b" style="left:1579.60px;top:736.60px;" width="15" height="16" viewBox="0 0 15 16"><g fill="none" stroke="#4a4a90" stroke-width="1" stroke-linejoin="round"><path d="M0.6 3.4 H10.4 L9 8.4 H2 Z"/><path d="M3.4 3.2 L5.4 0.8 L7.6 3.2"/><path d="M14.4 1.4 L11.8 9.6"/><path d="M0.6 10.6 L8.6 12.8"/><circle cx="11.6" cy="13" r="2.2"/></g></svg>
<div class="t" style="top:735.00px;font-size:12px;color:#000;left:1599.60px;">Order to provider #1</div>
<div class="t" style="top:735.00px;font-size:12px;color:#000;left:1755.30px;">Server - HP</div>
<svg class="b" style="left:2050.90px;top:736.60px;" width="22" height="23" viewBox="0 0 22 23"><rect x="0.6" y="2.8" width="20.8" height="19.4" rx="0.6" fill="#fff" stroke="#d81f26" stroke-width="1.1"/><path d="M3 2.7 H19" stroke="#d81f26" stroke-width="1"/><g fill="#fff" stroke="#d81f26" stroke-width="0.9"><rect x="3.6" y="0.5" width="2.2" height="4" rx="1"/><rect x="9.9" y="0.5" width="2.2" height="4" rx="1"/><rect x="16.2" y="0.5" width="2.2" height="4" rx="1"/></g><text x="11" y="15.2" text-anchor="middle" font-family="DejaVu Sans, Liberation Sans, sans-serif" font-size="6.9" fill="#555577">01/29</text></svg>
<svg class="b" style="left:2075.10px;top:736.00px;" width="26" height="26" viewBox="0 0 26 26"><defs><radialGradient id="sg5" cx="50%" cy="35%" r="70%"><stop offset="0" stop-color="#ffe14d"/><stop offset="0.55" stop-color="#fbb72e"/><stop offset="1" stop-color="#e8861c"/></radialGradient></defs><circle cx="13" cy="13" r="11.6" fill="#fff" stroke="#a6a6a6" stroke-width="1"/><g transform="translate(13 13) scale(0.696)"><circle cx="0" cy="0" r="12.5" fill="url(#sg5)"/><ellipse cx="-4.3" cy="-3.6" rx="1.7" ry="2.5" fill="#5b3413"/><ellipse cx="4.3" cy="-3.6" rx="1.7" ry="2.5" fill="#5b3413"/><path d="M-8.8 1 Q0 3.2 8.8 1 Q8 9.8 0 10 Q-8 9.8 -8.8 1 Z" fill="#7a4516"/><path d="M-8.2 1.6 Q0 3.6 8.2 1.6 Q8 5 6.8 6.6 Q0 8.2 -6.8 6.6 Q-8 5 -8.2 1.6 Z" fill="#fff"/></g></svg>
<div class="t" style="top:739.00px;font-size:12px;color:#000;left:1757.00px;width:800px;text-align:center;">recorded</div>
<svg class="b" style="left:1547.80px;top:772.20px;" width="15" height="16" viewBox="0 0 15 16"><g fill="none" stroke="#6363ad" stroke-width="1.25" stroke-linejoin="round"><path d="M5.7 2.2 V0.8 H9.3 V2.2" stroke-width="1.1"/><path d="M1.7 3 L2.6 14 Q2.7 15.2 3.9 15.2 H11.1 Q12.3 15.2 12.4 14 L13.3 3" fill="#e4e4f3"/><path d="M0.5 2.6 H14.5" stroke-width="1.4"/><path d="M4.9 5.2 L5.3 13 M7.5 5.2 V13 M10.1 5.2 L9.7 13" stroke-width="1.15"/></g></svg>
<svg class="b" style="left:1579.60px;top:771.60px;" width="15" height="16" viewBox="0 0 15 16"><g fill="none" stroke="#4a4a90" stroke-width="1"><rect x="0.6" y="0.8" width="9.6" height="7.4"/><path d="M5.4 2 V7 M6.8 3.2 C6 2.4 4 2.6 4 3.6 C4 4.8 6.8 4.2 6.8 5.4 C6.8 6.6 4.6 6.6 3.8 5.8" stroke-width="0.8"/><path d="M14.4 0.8 L11.6 9.4"/><path d="M0.6 10.6 L8.6 12.8"/><circle cx="11.6" cy="13" r="2.2"/></g></svg>
<div class="t" style="top:770.00px;font-size:12px;color:#000;left:1599.60px;">Payment to provider #</div>
<svg class="b" style="left:2050.90px;top:771.60px;" width="22" height="23" viewBox="0 0 22 23"><rect x="0.6" y="2.8" width="20.8" height="19.4" rx="0.6" fill="#fff" stroke="#d81f26" stroke-width="1.1"/><path d="M3 2.7 H19" stroke="#d81f26" stroke-width="1"/><g fill="#fff" stroke="#d81f26" stroke-width="0.9"><rect x="3.6" y="0.5" width="2.2" height="4" rx="1"/><rect x="9.9" y="0.5" width="2.2" height="4" rx="1"/><rect x="16.2" y="0.5" width="2.2" height="4" rx="1"/></g><text x="11" y="15.2" text-anchor="middle" font-family="DejaVu Sans, Liberation Sans, sans-serif" font-size="6.9" fill="#555577">01/29</text></svg>
<svg class="b" style="left:2075.10px;top:771.00px;" width="26" height="26" viewBox="0 0 26 26"><defs><radialGradient id="sg6" cx="50%" cy="35%" r="70%"><stop offset="0" stop-color="#ffe14d"/><stop offset="0.55" stop-color="#fbb72e"/><stop offset="1" stop-color="#e8861c"/></radialGradient></defs><circle cx="13" cy="13" r="11.6" fill="#fff" stroke="#a6a6a6" stroke-width="1"/><g transform="translate(13 13) scale(0.696)"><circle cx="0" cy="0" r="12.5" fill="url(#sg6)"/><ellipse cx="-4.3" cy="-3.6" rx="1.7" ry="2.5" fill="#5b3413"/><ellipse cx="4.3" cy="-3.6" rx="1.7" ry="2.5" fill="#5b3413"/><path d="M-8.8 1 Q0 3.2 8.8 1 Q8 9.8 0 10 Q-8 9.8 -8.8 1 Z" fill="#7a4516"/><path d="M-8.2 1.6 Q0 3.6 8.2 1.6 Q8 5 6.8 6.6 Q0 8.2 -6.8 6.6 Q-8 5 -8.2 1.6 Z" fill="#fff"/></g></svg>
<div class="b" style="left:1537.40px;top:816.00px;width:739.60px;height:2.00px;background:#4c4d82;"></div>
<svg class="b" style="left:1541.80px;top:830.20px" width="7.6" height="4.4" viewBox="0 0 7.6 4.4"><path d="M0 0 H7.6 L3.8 4.4 Z" fill="#000"/></svg>
<div class="t" style="top:823.00px;font-size:16px;color:#4c4d82;left:1554.60px;">Attachments</div>
<div class="b" style="left:2228.80px;top:824.80px;width:40.40px;height:12.00px;background:#4c4d82;border-radius:6px;"></div>
<div class="t" style="top:821.00px;font-size:9.6px;color:#fff;font-weight:bold;left:1849.00px;width:800px;text-align:center;">1</div>
<div class="b" style="left:1537.00px;top:852.00px;width:739.00px;height:27.00px;background:#efeff6;"></div>
<div class="b" style="left:1537.00px;top:852.00px;width:740.00px;height:1.00px;background:#a9a9a9;"></div>
<div class="b" style="left:1537.00px;top:879.00px;width:740.00px;height:1.00px;background:#a9a9a9;"></div>
<div class="b" style="left:1537.00px;top:914.00px;width:740.00px;height:1.00px;background:#a9a9a9;"></div>
<div class="b" style="left:1537.00px;top:852.00px;width:1.00px;height:63.00px;background:#a9a9a9;"></div>
<div class="b" style="left:1594.00px;top:852.00px;width:1.00px;height:63.00px;background:#a9a9a9;"></div>
<div class="b" style="left:1632.00px;top:852.00px;width:1.00px;height:63.00px;background:#a9a9a9;"></div>
<div class="b" style="left:2276.00px;top:852.00px;width:1.00px;height:63.00px;background:#a9a9a9;"></div>
<svg class="b" style="left:1548.40px;top:858.40px;" width="15" height="15" viewBox="0 0 15 15"><g fill="none"><rect x="0.6" y="0.6" width="13.8" height="13.8" rx="1" stroke-width="1.1" stroke="#8585c2" fill="#f4f4fb"/><path d="M7.5 4.1 V10.9 M4.1 7.5 H10.9" stroke-width="1.8" stroke="#2a2a7a"/></g></svg>
<svg class="b" style="left:1567.60px;top:857.60px;" width="17" height="17" viewBox="0 0 17 17"><g fill="none" stroke="#6c6cb2" stroke-width="1.2" transform="translate(8.2 8.2) rotate(-45)"><rect x="-2.6" y="-10.6" width="5.2" height="8.6" rx="2.6"/><rect x="-2.6" y="2" width="5.2" height="8.6" rx="2.6"/><path d="M0 -4.6 V4.6"/></g></svg>
<div class="t" style="top:857.00px;font-size:13.33px;color:#4f5489;left:1213.50px;width:800px;text-align:center;">id</div>
<div class="t" style="top:857.00px;font-size:13.33px;color:#4f5489;left:1554.50px;width:800px;text-align:center;">file</div>
<svg class="b" style="left:1546.20px;top:886.80px;" width="16" height="12" viewBox="0 0 16 12"><g fill="none" stroke="#6c6cb2" stroke-width="1.1" stroke-linejoin="round"><path d="M2.2 0.8 H13.4 L7.8 7.4 Z"/><rect x="0.6" y="9" width="14.6" height="2.4" rx="0.6"/></g></svg>
<svg class="b" style="left:1570.80px;top:885.00px;" width="15" height="16" viewBox="0 0 15 16"><g fill="none" stroke="#6363ad" stroke-width="1.25" stroke-linejoin="round"><path d="M5.7 2.2 V0.8 H9.3 V2.2" stroke-width="1.1"/><path d="M1.7 3 L2.6 14 Q2.7 15.2 3.9 15.2 H11.1 Q12.3 15.2 12.4 14 L13.3 3" fill="#e4e4f3"/><path d="M0.5 2.6 H14.5" stroke-width="1.4"/><path d="M4.9 5.2 L5.3 13 M7.5 5.2 V13 M10.1 5.2 L9.7 13" stroke-width="1.15"/></g></svg>
<div class="t" style="top:883.00px;font-size:12px;color:#000;left:1601.00px;">#21</div>
<svg class="b" style="left:1638.00px;top:885.00px;" width="16" height="16" viewBox="0 0 16 16"><rect x="0.5" y="0.5" width="15" height="15" fill="#e6edf9" stroke="#a9bfe6"/><rect x="1.6" y="1.6" width="12.8" height="12.8" fill="none" stroke="#f5f8fd" stroke-width="1"/><path d="M3.6 4.8 L5.2 11.4 L8 6.4 L9 11.4 L12.8 4.6" fill="none" stroke="#9fb3da" stroke-width="1.9" stroke-linejoin="round"/></svg>
<div class="t" style="top:883.00px;font-size:12px;color:#000;left:1674.40px;">Quot001-554-72.docx</div>
<svg class="b" style="left:2221.80px;top:885.60px;" width="22" height="23" viewBox="0 0 22 23"><rect x="0.6" y="2.8" width="20.8" height="19.4" rx="0.6" fill="#fff" stroke="#ff9440" stroke-width="1.1"/><path d="M3 2.7 H19" stroke="#ff9440" stroke-width="1"/><g fill="#fff" stroke="#ff9440" stroke-width="0.9"><rect x="3.6" y="0.5" width="2.2" height="4" rx="1"/><rect x="9.9" y="0.5" width="2.2" height="4" rx="1"/><rect x="16.2" y="0.5" width="2.2" height="4" rx="1"/></g><text x="11" y="15.2" text-anchor="middle" font-family="DejaVu Sans, Liberation Sans, sans-serif" font-size="6.9" fill="#555577">01/28</text></svg>
<svg class="b" style="left:2246.00px;top:884.60px;" width="26" height="26" viewBox="0 0 26 26"><defs><radialGradient id="sg7" cx="50%" cy="35%" r="70%"><stop offset="0" stop-color="#ffe14d"/><stop offset="0.55" stop-color="#fbb72e"/><stop offset="1" stop-color="#e8861c"/></radialGradient></defs><circle cx="13" cy="13" r="11.6" fill="#fff" stroke="#a6a6a6" stroke-width="1"/><g transform="translate(13 13) scale(0.696)"><circle cx="0" cy="0" r="12.5" fill="url(#sg7)"/><ellipse cx="-4.3" cy="-3.6" rx="1.7" ry="2.5" fill="#5b3413"/><ellipse cx="4.3" cy="-3.6" rx="1.7" ry="2.5" fill="#5b3413"/><path d="M-8.8 1 Q0 3.2 8.8 1 Q8 9.8 0 10 Q-8 9.8 -8.8 1 Z" fill="#7a4516"/><path d="M-8.2 1.6 Q0 3.6 8.2 1.6 Q8 5 6.8 6.6 Q0 8.2 -6.8 6.6 Q-8 5 -8.2 1.6 Z" fill="#fff"/></g></svg>
<div class="b" style="left:1537.40px;top:929.60px;width:739.60px;height:2.00px;background:#4c4d82;"></div>
<svg class="b" style="left:1541.80px;top:943.80px" width="7.6" height="4.4" viewBox="0 0 7.6 4.4"><path d="M0 0 H7.6 L3.8 4.4 Z" fill="#000"/></svg>
<div class="t" style="top:936.00px;font-size:16px;color:#4c4d82;left:1554.60px;">Notes</div>
<div class="b" style="left:2228.80px;top:938.40px;width:40.40px;height:12.00px;background:#4c4d82;border-radius:6px;"></div>
<div class="t" style="top:934.00px;font-size:9.6px;color:#fff;font-weight:bold;left:1849.00px;width:800px;text-align:center;">0</div>
<div class="b" style="left:1537.00px;top:966.00px;width:739.00px;height:27.00px;background:#efeff6;"></div>
<div class="b" style="left:1537.00px;top:966.00px;width:740.00px;height:1.00px;background:#a9a9a9;"></div>
<div class="b" style="left:1537.00px;top:993.00px;width:740.00px;height:1.00px;background:#a9a9a9;"></div>
<div class="b" style="left:1537.00px;top:966.00px;width:1.00px;height:28.00px;background:#a9a9a9;"></div>
<div class="b" style="left:1611.00px;top:966.00px;width:1.00px;height:28.00px;background:#a9a9a9;"></div>
<div class="b" style="left:1648.00px;top:966.00px;width:1.00px;height:28.00px;background:#a9a9a9;"></div>
<div class="b" style="left:2276.00px;top:966.00px;width:1.00px;height:28.00px;background:#a9a9a9;"></div>
<svg class="b" style="left:1567.60px;top:972.60px;" width="15" height="15" viewBox="0 0 15 15"><g fill="none"><rect x="0.6" y="0.6" width="13.8" height="13.8" rx="1" stroke-width="1.1" stroke="#8585c2" fill="#f4f4fb"/><path d="M7.5 4.1 V10.9 M4.1 7.5 H10.9" stroke-width="1.8" stroke="#2a2a7a"/></g></svg>
<div class="t" style="top:971.00px;font-size:13.33px;color:#4f5489;left:1230.00px;width:800px;text-align:center;">id</div>
<div class="t" style="top:971.00px;font-size:13.33px;color:#4f5489;left:1562.50px;width:800px;text-align:center;">note</div>
</div></body></html>
